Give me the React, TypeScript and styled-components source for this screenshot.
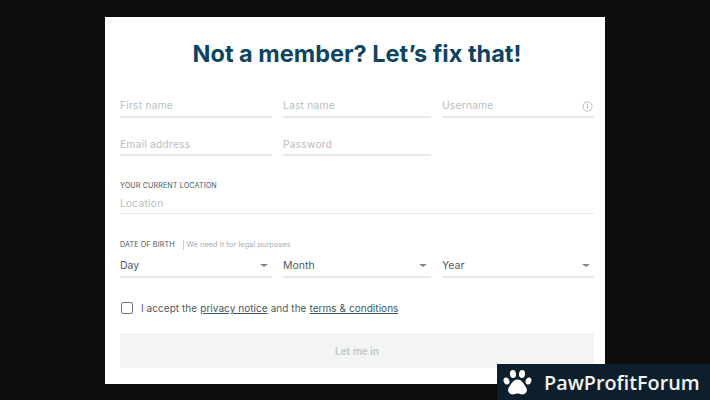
import React from "react";
import styled, { createGlobalStyle } from "styled-components";

const Global = createGlobalStyle`
  html, body { margin: 0; padding: 0; background: #0d0d0d; }
  body { font-family: Inter, "Liberation Sans", sans-serif; }
`;

const Page = styled.div`
  position: relative;
  width: 710px;
  height: 400px;
  overflow: hidden;
  background: #0d0d0d;
  padding-top: 17px;
  box-sizing: border-box;
`;

const Card = styled.main`
  width: 500px;
  height: 367px;
  margin-left: 105px;
  background: #fff;
  box-sizing: border-box;
  padding: 0 11px 0 15px;
  display: flex;
  flex-direction: column;
`;

const Title = styled.h1`
  margin: 22px 0 0;
  height: 30px;
  font-size: 23.5px;
  line-height: 30px;
  font-weight: 700;
  color: #0d4460;
  text-align: center;
`;

const Grid = styled.div<{ $top: number }>`
  display: grid;
  grid-template-columns: 152px 148px 152px;
  column-gap: 11px;
  margin-top: ${(p) => p.$top}px;
`;

const Field = styled.div<{ $height?: number; $pad?: number }>`
  position: relative;
  height: ${(p) => p.$height ?? 24}px;
  padding-top: ${(p) => p.$pad ?? 1}px;
  border-bottom: 2px solid #e8eaea;
  box-sizing: border-box;
  display: flex;
  align-items: center;
  justify-content: space-between;
  font-size: 10.2px;
  letter-spacing: 0.25px;
  color: #b7bdbd;
`;

const SelectField = styled(Field)`
  color: #4f5a5f;
  font-size: 10.5px;
  letter-spacing: 0;
`;

const Caret = styled.span`
  width: 0;
  height: 0;
  margin-right: 4px;
  border-left: 4px solid transparent;
  border-right: 4px solid transparent;
  border-top: 3.5px solid #7d8588;
`;

const InfoIcon = styled.svg`
  width: 11px;
  height: 11px;
  margin-right: 1px;
  margin-top: 2px;
`;

const Section = styled.div<{ $top: number }>`
  margin-top: ${(p) => p.$top}px;
  width: 474px;
`;

const SmallLabel = styled.div`
  font-size: 7.2px;
  line-height: 10px;
  height: 10px;
  letter-spacing: 0.1px;
  color: #4c5659;
  text-transform: uppercase;
  display: flex;
  align-items: center;
`;

const Hint = styled.span`
  margin-left: 8px;
  padding-left: 3px;
  border-left: 1px solid #c9cdcd;
  font-size: 7.3px;
  color: #a4abab;
  text-transform: none;
`;

const FullField = styled(Field)`
  height: 23px;
  width: 474px;
  border-bottom-width: 1px;
`;

const AcceptRow = styled.label`
  display: flex;
  align-items: center;
  margin-top: 21px;
  height: 18px;
  font-size: 10px;
  letter-spacing: 0.05px;
  color: #4f5a5f;
`;

const Box = styled.span`
  width: 10px;
  height: 10px;
  margin-left: 1px;
  border: 1.5px solid #66767a;
  border-radius: 2px;
  margin-right: 8px;
  box-sizing: content-box;
  flex: none;
`;

const TextLink = styled.a`
  color: #3c5866;
  text-decoration: underline;
  margin: 0 3px;
`;

const SubmitButton = styled.button`
  width: 474px;
  height: 35px;
  margin-top: 16px;
  border: 0;
  padding: 0;
  background: #f3f5f5;
  color: #c6caca;
  font-family: inherit;
  font-size: 10px;
  font-weight: 700;
`;

const Badge = styled.div`
  position: absolute;
  right: 0;
  bottom: 0;
  width: 213px;
  height: 36px;
  background: #0d1f2d;
  display: flex;
  align-items: center;
  padding-left: 6px;
  box-sizing: border-box;
  gap: 12px;
`;

const BadgeText = styled.span`
  font-family: "Open Sans", Lato, sans-serif;
  font-size: 19.8px;
  font-weight: 600;
  color: #f2f4f5;
`;

const PawIcon = () => (
  <svg width="29" height="28" viewBox="0 0 29 28" fill="#fff" aria-hidden="true">
    <ellipse cx="3.5" cy="13" rx="2.8" ry="3.6" transform="rotate(-20 3.5 13)" />
    <ellipse cx="10" cy="6" rx="3" ry="4" transform="rotate(-8 10 6)" />
    <ellipse cx="19" cy="6" rx="3" ry="4" transform="rotate(8 19 6)" />
    <ellipse cx="25.5" cy="13" rx="2.8" ry="3.6" transform="rotate(20 25.5 13)" />
    <path d="M14.5 11.5c3.5 0 5.5 3 7.5 6 1.6 2.5 2.4 4 1.6 6-.8 2.2-3.4 3.4-5.6 2.8-1.5-.4-2.4-.8-3.5-.8s-2 .4-3.5.8c-2.2.6-4.8-.6-5.6-2.8-.8-2 0-3.5 1.6-6 2-3 4-6 7.5-6z" />
  </svg>
);

export default function App() {
  return (
    <Page>
      <Global />
      <Card>
        <Title>Not a member? Let’s fix that!</Title>
        <Grid $top={25}>
          <Field $pad={0}>First name</Field>
          <Field $pad={0}>Last name</Field>
          <Field $pad={0}>
            Username
            <InfoIcon viewBox="0 0 12 12" fill="none" stroke="#a9b0b0">
              <circle cx="6" cy="6" r="5" strokeWidth="0.9" />
              <path d="M6 5.4v3M6 3.4v.9" strokeWidth="1.1" />
            </InfoIcon>
          </Field>
        </Grid>
        <Grid $top={14}>
          <Field>Email address</Field>
          <Field>Password</Field>
        </Grid>
        <Section $top={25}>
          <SmallLabel>Your current location</SmallLabel>
          <FullField>Location</FullField>
        </Section>
        <Section $top={26}>
          <SmallLabel>
            Date of birth
            <Hint>We need it for legal purposes</Hint>
          </SmallLabel>
        </Section>
        <Grid $top={3}>
          <SelectField $height={25}>Day<Caret /></SelectField>
          <SelectField $height={25}>Month<Caret /></SelectField>
          <SelectField $height={25}>Year<Caret /></SelectField>
        </Grid>
        <AcceptRow>
          <Box />
          I accept the
          <TextLink>privacy notice</TextLink>
          and the
          <TextLink>terms &amp; conditions</TextLink>
        </AcceptRow>
        <SubmitButton>Let me in</SubmitButton>
      </Card>
      <Badge>
        <PawIcon />
        <BadgeText>PawProfitForum</BadgeText>
      </Badge>
    </Page>
  );
}
